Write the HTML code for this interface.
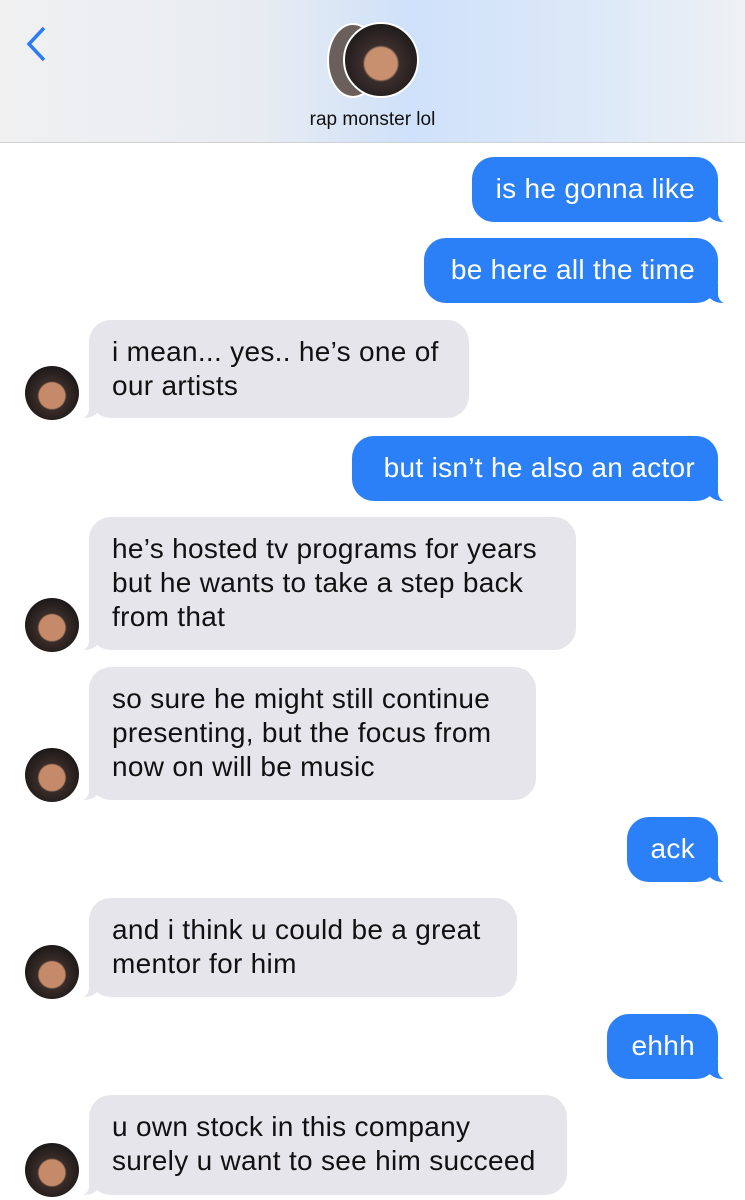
<!DOCTYPE html>
<html><head><meta charset="utf-8"><style>
body{margin:0;width:745px;height:1200px;background:#fff;position:relative;overflow:hidden;font-family:"Liberation Sans",sans-serif}
.hdr{position:absolute;left:0;top:0;width:745px;height:142px;background:linear-gradient(90deg,#f0f0f1 0%,#e8ecf2 35%,#cfe1fa 55%,#dde9f8 80%,#eef0f4 100%);border-bottom:1px solid #cfd0d2}
.name{position:absolute;top:109px;width:745px;text-align:center;font-size:19px;color:#111}
.b{position:absolute;border-radius:22px;font-size:28px;letter-spacing:0.3px;line-height:34px;padding:0 23px;box-sizing:border-box;white-space:nowrap}
.s{background:#2b80f7;color:#fff;right:27px;height:65px;padding-top:15px;text-align:right}
.r{background:#e6e5eb;color:#111;left:89px;padding-top:15px}
.s:after{content:"";position:absolute;right:-8px;bottom:0;width:20px;height:20px;background:#2b80f7;border-bottom-left-radius:16px 14px}
.s:before{content:"";position:absolute;right:-20px;bottom:-1px;width:20px;height:24px;background:#fff;border-bottom-left-radius:10px;z-index:1}
.r:after{content:"";position:absolute;left:-8px;bottom:0;width:20px;height:20px;background:#e6e5eb;border-bottom-right-radius:16px 14px}
.r:before{content:"";position:absolute;left:-20px;bottom:-1px;width:20px;height:24px;background:#fff;border-bottom-right-radius:10px;z-index:1}
.av{position:absolute;z-index:5;left:25px;width:54px;height:54px;border-radius:50%;background:radial-gradient(circle at 50% 55%,#c48a6a 0 32%,#3a2c28 36%,#1e1a1a 70%)}
</style></head><body>
<div class="hdr">
<svg style="position:absolute;left:24px;top:26px" width="24" height="36"><path d="M20 2 L5 18 L20 34" stroke="#2c7cf6" stroke-width="3.5" fill="none"/></svg>
<div style="position:absolute;left:327px;top:23px;width:48px;height:71px;border-radius:50%;background:#6a5f5a;border:2px solid #fff"></div>
<div style="position:absolute;left:343px;top:22px;width:72px;height:72px;border-radius:50%;background:radial-gradient(circle at 50% 55%,#c99070 0 30%,#3b2e2c 34%,#221d1d 70%);border:2px solid #fff"></div>
<div class="name">rap monster lol</div>
</div>
<div class="b s" style="top:157px;width:246px">is he gonna like</div>
<div class="b s" style="top:238px;width:294px">be here all the time</div>
<div class="b r" style="top:320px;width:380px;height:98px">i mean... yes.. he’s one of<br>our artists</div>
<div class="av" style="top:366px"></div>
<div class="b s" style="top:436px;width:366px">but isn’t he also an actor</div>
<div class="b r" style="top:517px;width:487px;height:133px">he’s hosted tv programs for years<br>but he wants to take a step back<br>from that</div>
<div class="av" style="top:598px"></div>
<div class="b r" style="top:667px;width:447px;height:133px">so sure he might still continue<br>presenting, but the focus from<br>now on will be music</div>
<div class="av" style="top:748px"></div>
<div class="b s" style="top:817px;width:91px">ack</div>
<div class="b r" style="top:898px;width:428px;height:99px">and i think u could be a great<br>mentor for him</div>
<div class="av" style="top:945px"></div>
<div class="b s" style="top:1014px;width:111px">ehhh</div>
<div class="b r" style="top:1095px;width:478px;height:100px">u own stock in this company<br>surely u want to see him succeed</div>
<div class="av" style="top:1143px"></div>
</body></html>
